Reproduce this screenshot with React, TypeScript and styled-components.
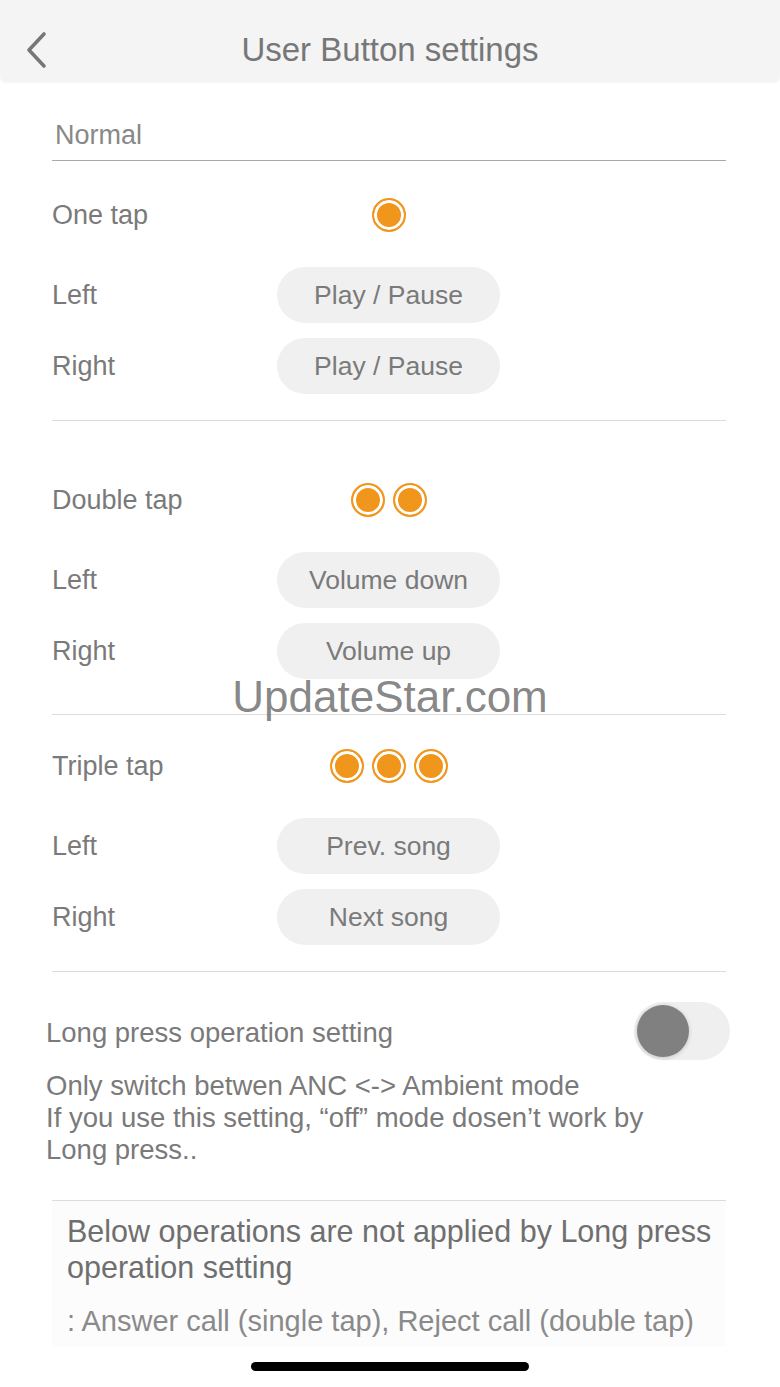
import styled, { createGlobalStyle } from "styled-components";

const GlobalStyle = createGlobalStyle`
  html, body {
    margin: 0;
    padding: 0;
    background: #ffffff;
  }
  body {
    font-family: "Liberation Sans", Arial, sans-serif;
    color: #7a7a7a;
  }
  * {
    box-sizing: border-box;
  }
`;

const Screen = styled.div`
  position: relative;
  width: 780px;
  min-height: 1387px;
  background: #fff;
  overflow: hidden;
`;

const Header = styled.header`
  position: relative;
  height: 82px;
  padding-top: 18px;
  background: #f4f4f4;
  border-bottom-left-radius: 6px;
  border-bottom-right-radius: 6px;
  box-shadow: 0 1px 2px rgba(0, 0, 0, 0.04);
`;

const Title = styled.h1`
  margin: 0;
  height: 64px;
  line-height: 64px;
  text-align: center;
  font-size: 33px;
  font-weight: normal;
  color: #777;
`;

const BackButton = styled.button`
  position: absolute;
  left: 20px;
  top: 30px;
  width: 32px;
  height: 40px;
  padding: 0;
  border: 0;
  background: none;
  display: flex;
  align-items: center;
  justify-content: center;
`;

const ModeTitle = styled.div`
  margin: 37px 54px 0 52px;
  padding: 0 0 9px 3px;
  line-height: 32px;
  font-size: 27px;
  color: #888;
  border-bottom: 1.5px solid #aaa;
`;

const TapGroup = styled.section<{ $top: number; $bottom: number }>`
  margin: 0 54px 0 52px;
  padding: ${(p) => p.$top}px 0 ${(p) => p.$bottom}px 0;
  border-bottom: 1px solid #dcdcdc;
  display: flex;
  flex-direction: column;
  gap: 15px;
`;

const Row = styled.div<{ $after?: number }>`
  display: grid;
  grid-template-columns: 225px 223px;
  align-items: center;
  height: 56px;
  margin-bottom: ${(p) => p.$after ?? 0}px;
`;

const Label = styled.span`
  font-size: 27px;
  color: #7a7a7a;
`;

const Pill = styled.button`
  height: 56px;
  border: 0;
  border-radius: 28px;
  background: #f0f0f0;
  font-family: "Liberation Sans", Arial, sans-serif;
  font-size: 26.5px;
  color: #7a7a7a;
  text-align: center;
  padding: 0;
`;

const Dots = styled.div`
  display: flex;
  justify-content: center;
  gap: 8px;
`;

const Dot = styled.span`
  width: 34px;
  height: 34px;
  border-radius: 50%;
  border: 2px solid #f0961d;
  background: #f0961d;
  box-shadow: inset 0 0 0 3px #fff;
`;

const LongPress = styled.section`
  margin: 0 54px 0 52px;
  padding: 30px 0 34px 0;
  border-bottom: 1px solid #dcdcdc;
`;

const LongPressRow = styled.div`
  display: flex;
  align-items: center;
  justify-content: space-between;
  height: 58px;
  margin: 0 -4px 0 -6px;
`;

const LongPressLabel = styled.span`
  font-size: 27.5px;
  color: #7a7a7a;
  padding-top: 4px;
`;

const Toggle = styled.div`
  width: 96px;
  height: 58px;
  border-radius: 29px;
  background: #efefef;
  padding: 3px;
  display: flex;
  align-items: center;
`;

const Knob = styled.span`
  width: 52px;
  height: 52px;
  border-radius: 50%;
  background: #808080;
  box-shadow: 0 1px 4px rgba(0, 0, 0, 0.18);
`;

const Description = styled.p`
  margin: 10px 0 0 -6px;
  font-size: 27.5px;
  line-height: 32px;
  color: #7a7a7a;
  white-space: nowrap;
`;

const Notice = styled.section`
  margin: 0 54px 0 52px;
  padding: 12px 0 8px 15px;
  background: #fcfcfc;
`;

const NoticeTitle = styled.p`
  margin: 0;
  font-size: 30.5px;
  line-height: 36px;
  color: #6f6f6f;
  white-space: nowrap;
`;

const NoticeBody = styled.p`
  margin: 19px 0 0 0;
  font-size: 29px;
  line-height: 34px;
  color: #8a8a8a;
  white-space: nowrap;
`;

const HomeIndicator = styled.div`
  width: 278px;
  height: 9px;
  margin: 16px auto 0 auto;
  border-radius: 5px;
  background: #000;
`;

const Watermark = styled.div`
  position: absolute;
  top: 670px;
  left: 0;
  right: 0;
  text-align: center;
  font-size: 44px;
  line-height: 54px;
  color: rgba(120, 120, 120, 0.9);
  pointer-events: none;
`;

type Tap = {
  name: string;
  dots: number;
  left: string;
  right: string;
  top: number;
  bottom: number;
};

const taps: Tap[] = [
  { name: "One tap", dots: 1, left: "Play / Pause", right: "Play / Pause", top: 26, bottom: 26 },
  { name: "Double tap", dots: 2, left: "Volume down", right: "Volume up", top: 51, bottom: 35 },
  { name: "Triple tap", dots: 3, left: "Prev. song", right: "Next song", top: 23, bottom: 26 },
];

function ChevronLeft() {
  return (
    <svg width="24" height="38" viewBox="0 0 24 38">
      <polyline
        points="20,3 5,19 20,35"
        fill="none"
        stroke="#777"
        strokeWidth="3.6"
        strokeLinecap="round"
        strokeLinejoin="round"
      />
    </svg>
  );
}

export default function App() {
  return (
    <>
      <GlobalStyle />
      <Screen>
        <Header>
          <BackButton aria-label="Back">
            <ChevronLeft />
          </BackButton>
          <Title>User Button settings</Title>
        </Header>

        <ModeTitle>Normal</ModeTitle>

        {taps.map((t) => (
          <TapGroup key={t.name} $top={t.top} $bottom={t.bottom}>
            <Row $after={9}>
              <Label>{t.name}</Label>
              <Dots>
                {Array.from({ length: t.dots }).map((_, i) => (
                  <Dot key={i} />
                ))}
              </Dots>
            </Row>
            <Row>
              <Label>Left</Label>
              <Pill>{t.left}</Pill>
            </Row>
            <Row>
              <Label>Right</Label>
              <Pill>{t.right}</Pill>
            </Row>
          </TapGroup>
        ))}

        <LongPress>
          <LongPressRow>
            <LongPressLabel>Long press operation setting</LongPressLabel>
            <Toggle>
              <Knob />
            </Toggle>
          </LongPressRow>
          <Description>
            Only switch betwen ANC &lt;-&gt; Ambient mode
            <br />
            If you use this setting, “off” mode dosen’t work by
            <br />
            Long press..
          </Description>
        </LongPress>

        <Notice>
          <NoticeTitle>
            Below operations are not applied by Long press
            <br />
            operation setting
          </NoticeTitle>
          <NoticeBody>: Answer call (single tap), Reject call (double tap)</NoticeBody>
        </Notice>

        <HomeIndicator />

        <Watermark>UpdateStar.com</Watermark>
      </Screen>
    </>
  );
}
